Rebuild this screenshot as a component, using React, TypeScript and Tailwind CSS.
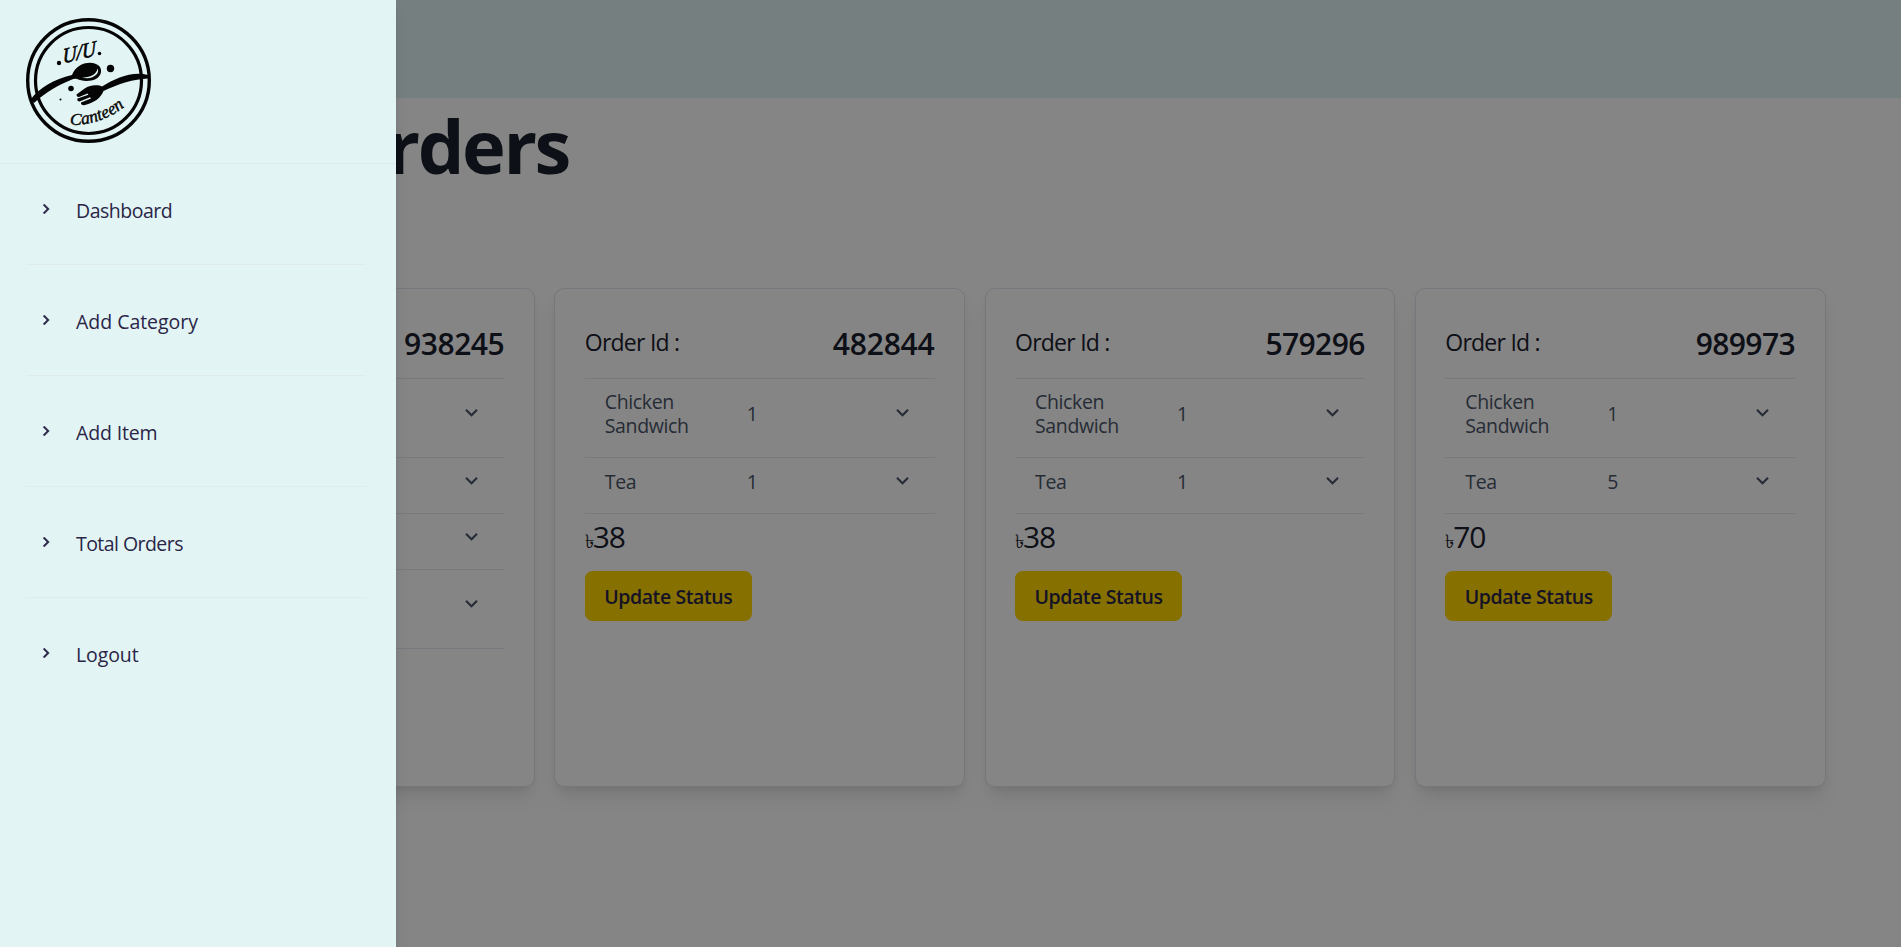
import React from "react";

type Line = { name?: string; qty?: number; tall?: boolean };
type Order = { id: string; lines: Line[]; total?: number; idClass: string };

const chicken = (qty: number): Line => ({ name: "Chicken Sandwich", qty, tall: true });
const tea = (qty: number): Line => ({ name: "Tea", qty });

const orders: Order[] = [
  { id: "938245", lines: [{ tall: true }, {}, {}, { tall: true }], idClass: "tracking-[-0.45px]" },
  { id: "482844", lines: [chicken(1), tea(1)], total: 38, idClass: "tracking-[-0.2px]" },
  { id: "579296", lines: [chicken(1), tea(1)], total: 38, idClass: "tracking-[-0.6px]" },
  { id: "989973", lines: [chicken(1), tea(5)], total: 70, idClass: "tracking-[-0.6px]" },
];

const links = [
  { label: "Dashboard", spacing: "tracking-[-0.5px]" },
  { label: "Add Category", spacing: "tracking-[-0.03px]" },
  { label: "Add Item", spacing: "tracking-[-0.15px]" },
  { label: "Total Orders", spacing: "tracking-[-0.55px]" },
  { label: "Logout", spacing: "tracking-[-0.1px]" },
];

function ChevronDown() {
  return (
    <svg viewBox="0 0 24 24" className="mb-[3px] size-[25px] fill-[#4a5568]">
      <path d="M16.59 8.59L12 13.17 7.41 8.59 6 10l6 6 6-6z" />
    </svg>
  );
}

function ChevronRight() {
  return (
    <svg viewBox="0 0 24 24" className="size-5 fill-[#2a2547] stroke-[#2a2547]" strokeWidth="0.5">
      <path d="M10 6L8.59 7.41 13.17 12l-4.58 4.59L10 18l6-6z" />
    </svg>
  );
}

function Logo() {
  return (
    <svg viewBox="0 0 125 125" className="size-[125px]" fill="#050505">
      <circle cx="62.5" cy="62.5" r="60.8" fill="none" stroke="#050505" strokeWidth="3.4" />
      <circle cx="62.5" cy="62.5" r="53" fill="none" stroke="#050505" strokeWidth="3.2" />
      <path d="M5 81 C13 70 28 61 46 57 C49 49 56 45 64 44.8 C72 44.8 77 50 74.5 56 C72 62 63 64.5 54 62 C50 60.5 48 60.5 46 61.5 C32 67 20 74 8 85 Z" />
      <path d="M56 59.5 C64 60 71 56 71.5 50.5 C74.5 55 67 62.5 56 59.5 Z" fill="#e2f4f4" />
      <path d="M122 57 C106 53 90 60 76 68.5 C72 66 62 67.5 58 71 L50.5 76.5 Q50.5 79 53 79 L61.5 75.5 L62.5 76.8 L51.5 80.5 Q50.5 83 53.5 83.5 L64 79.3 L65 80.5 L55 84.5 Q54.5 87 58 87.2 C68 85 75 80 77.5 73 C92 66 108 61 122 60.5 Z" />
      <circle cx="84.5" cy="50.5" r="3.7" />
      <circle cx="45" cy="70.5" r="2.8" />
      <circle cx="34.5" cy="81.5" r="1" />
      <circle cx="33" cy="45" r="2.2" />
      <circle cx="73.5" cy="35.5" r="1.8" />
      <text
        transform="translate(37 45.5) rotate(-14) skewX(-12)"
        fontFamily="Liberation Serif, serif"
        fontStyle="italic"
        fontSize="21"
        textLength="34"
        lengthAdjust="spacingAndGlyphs"
        stroke="#050505"
        strokeWidth="0.6"
      >
        U/U
      </text>
      <path id="logo-arc" d="M44 106.5 Q74 109 102 86" fill="none" />
      <text fontFamily="Liberation Serif, serif" fontStyle="italic" fontSize="17.5" stroke="#050505" strokeWidth="0.4">
        <textPath href="#logo-arc" textLength="59">Canteen</textPath>
      </text>
    </svg>
  );
}

function OrderCard({ order }: { order: Order }) {
  return (
    <article className="flex h-[499px] flex-col items-start rounded-[10px] border border-[#e2e2f0] bg-white px-[29.5px] pt-[34px] shadow-[0_12.5px_19px_-4px_rgba(0,0,0,0.1),0_5px_7.5px_-2.5px_rgba(0,0,0,0.05)]">
      <header className="flex h-[56px] w-full items-start justify-between border-b border-[#e2e8f0]">
        <span className="text-[23px] leading-[38px] tracking-[-0.75px]">Order Id :</span>
        <span className={`text-[30px] leading-[42px] font-semibold ${order.idClass}`}>{order.id}</span>
      </header>
      {order.lines.map((line, index) => (
        <div
          key={index}
          className={`flex w-full items-center border-b border-[#e2e8f0] pr-[20px] pl-[20px] text-[19.5px] leading-6 text-[#4a5568] ${line.tall ? "h-[79px] pb-[9px]" : "h-[56px] pb-[7px]"}`}
        >
          <span className="w-[142px] pr-[39px] tracking-[-0.35px]">{line.name}</span>
          <span className="flex-1">{line.qty}</span>
          <ChevronDown />
        </div>
      ))}
      {order.total !== undefined && (
        <>
          <p className="h-[48px] text-[30px] leading-[46px] tracking-[-1.1px]">
            <span className="text-[19px] leading-none">৳</span>
            {order.total}
          </p>
          <button className="mt-[9px] h-[50px] w-[167px] rounded-[7.5px] bg-[#ffd700] pt-[2px] text-[19.5px] font-semibold tracking-[-0.4px] text-[#2a2547]">
            Update Status
          </button>
        </>
      )}
    </article>
  );
}

export default function App() {
  return (
    <div className="relative h-[947px] overflow-hidden bg-white font-['Open_Sans','Noto_Sans',sans-serif] text-[#1a202c]">
      <div className="h-[98px] bg-[#e2f4f4]" />
      <main className="pr-[75.5px] pl-[124px]">
        <h1 className="h-[190px] w-[445px] text-right text-[74px] leading-[96px] font-bold tracking-[-2.4px] whitespace-nowrap">Orders</h1>
        <section className="grid grid-cols-4 gap-[19.5px]">
          {orders.map((order) => (
            <OrderCard key={order.id} order={order} />
          ))}
        </section>
      </main>
      <div className="absolute inset-0 bg-black/48" />
      <aside className="absolute inset-y-0 left-0 w-[396px] bg-[#e2f4f4] text-[#2a2547] shadow-[0_10px_15px_-3px_rgba(0,0,0,0.1),0_4px_6px_-2px_rgba(0,0,0,0.05)]">
        <div className="h-[164px] border-b border-[#dbeaec] pt-[18px] pl-[26px]">
          <Logo />
        </div>
        <nav className="px-[26px] pr-[30px]">
          {links.map(({ label, spacing }) => (
            <a key={label} className="flex h-[111px] border-b border-[#e0ecec] pt-[45px] pl-[10px] first:h-[101px] first:pt-[35px] last:border-0">
              <span className="mr-[20px]">
                <ChevronRight />
              </span>
              <span className={`text-[19.5px] leading-[24px] ${spacing}`}>{label}</span>
            </a>
          ))}
        </nav>
      </aside>
    </div>
  );
}
